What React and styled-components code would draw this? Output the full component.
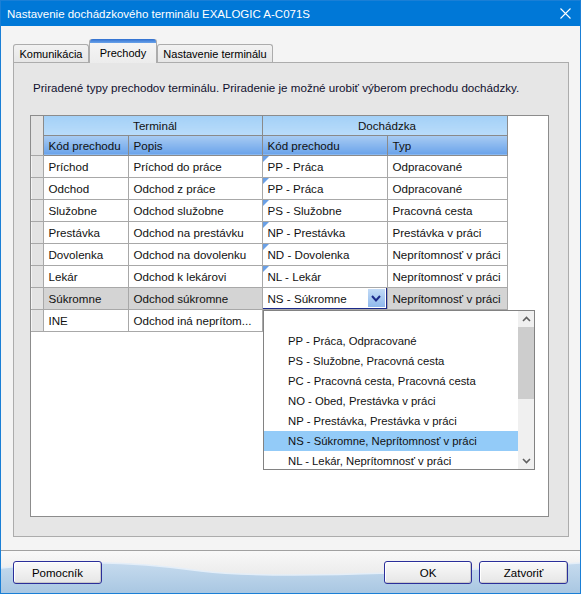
import React from "react";
import styled, { createGlobalStyle } from "styled-components";

const Global = createGlobalStyle`
  html, body { margin: 0; padding: 0; background: #f4f4f4; }
  * { box-sizing: border-box; }
  body { font-family: "Liberation Sans", Arial, sans-serif; }
`;

const Window = styled.div`
  width: 581px;
  height: 594px;
  border: 1px solid #1a7fd6;
  display: flex;
  flex-direction: column;
  background: #f4f4f4;
  overflow: hidden;
`;

const TitleBar = styled.div`
  height: 25px;
  flex: none;
  background: #0078d7;
  color: #fff;
  font-size: 11.5px;
  display: flex;
  align-items: center;
  justify-content: space-between;
  padding: 0 9px 0 6px;
`;

const Body = styled.div`
  flex: 1;
  padding: 13px 11px 13px 12px;
  display: flex;
  flex-direction: column;
`;

const TabStrip = styled.div`
  height: 23px;
  display: flex;
  align-items: flex-end;
  font-size: 11px;
`;

const Tab = styled.div`
  position: relative;
  height: ${(p) => (p.$active ? "24px" : "18px")};
  margin-bottom: ${(p) => (p.$active ? "-1px" : "0")};
  width: ${(p) => p.$w}px;
  border: 1px solid #acacac;
  border-bottom: none;
  border-radius: 3px 3px 0 0;
  background: ${(p) =>
    p.$active ? "linear-gradient(#f6f6f6, #ececec)" : "linear-gradient(#f2f2f2, #e6e6e6)"};
  color: #000;
  display: flex;
  align-items: center;
  justify-content: center;
  padding-top: ${(p) => (p.$active ? "2px" : "0")};
  z-index: ${(p) => (p.$active ? 2 : 1)};
  ${(p) =>
    p.$active &&
    `&::before{content:"";position:absolute;left:0;right:0;top:-1px;height:4px;border-radius:3px 3px 0 0;background:linear-gradient(#2f6fcf,#6aa3ea);}`}
`;

const Panel = styled.div`
  height: 475px;
  border: 1px solid #acacac;
  background: #e6e6e6;
  padding: 18px 19px 19px 16px;
  display: flex;
  flex-direction: column;
`;

const Intro = styled.div`
  font-size: 11.6px;
  line-height: 14px;
  color: #10102e;
  margin: 0 0 20px 3px;
`;

const GridBox = styled.div`
  position: relative;
  flex: 1;
  background: #fff;
  border: 1px solid #8c8c8c;
`;

const Table = styled.table`
  width: 476px;
  border-collapse: collapse;
  table-layout: fixed;
  font-size: 11.6px;
  color: #111;
`;

const Th = styled.th`
  height: ${(p) => (p.$group ? "19px" : "20px")};
  padding: 0 0 0 5px;
  font-weight: normal;
  text-align: ${(p) => (p.$center ? "center" : "left")};
  border: 1px solid #8a8a8a;
  border-top: ${(p) => (p.$top ? "none" : "1px solid #8a8a8a")};
  background: ${(p) =>
    p.$group
      ? "linear-gradient(#a3d0f7, #b9dcfa)"
      : "linear-gradient(#a9ccf3, #6aa3ea)"};
  white-space: nowrap;
  overflow: hidden;
`;

const Corner = styled.th`
  background: #e3e3e3;
  border-right: 1px solid #8a8a8a;
  border-bottom: 1px solid #a8a8a8;
`;

const RowHead = styled.td`
  background: #e3e3e3;
  border: 1px solid #a8a8a8;
  border-left: none;
  box-shadow: inset 1px 0 0 #f4f4f4;
`;

const Td = styled.td`
  position: relative;
  height: 22px;
  padding: 0 3px 0 5px;
  border: 1px solid #a8a8a8;
  background: ${(p) => (p.$sel ? "#d4d4d4" : "#fff")};
  white-space: nowrap;
  overflow: hidden;
  ${(p) =>
    p.$mark &&
    `&::before{content:"";position:absolute;left:0;top:0;border-top:6px solid #6aa0e6;border-right:6px solid transparent;}`}
`;

const ComboCell = styled.td`
  height: 22px;
  padding: 0;
  border: 1px solid #a8a8a8;
  background: #fff;
`;

const Combo = styled.div`
  height: 22px;
  margin: -1px 0 -1px -1px;
  border: 1px solid #1c2a8a;
  display: flex;
  align-items: center;
  padding-left: 5px;
  background: #fff;
`;

const ComboText = styled.span`
  flex: 1;
`;

const ComboBtn = styled.span`
  width: 17px;
  height: 18px;
  margin-right: 1px;
  background: linear-gradient(#c3dbf6, #8fb9ec);
  display: flex;
  align-items: center;
  justify-content: center;
`;

const DropList = styled.div`
  position: absolute;
  left: 232px;
  top: 194px;
  width: 272px;
  height: 160px;
  border: 1px solid #828282;
  background: #fff;
  display: flex;
  font-size: 11.3px;
  color: #111;
`;

const Items = styled.div`
  flex: 1;
  overflow: hidden;
`;

const Item = styled.div`
  height: 20px;
  line-height: 20px;
  padding-left: 24px;
  background: ${(p) => (p.$hl ? "#93cbf8" : "transparent")};
  white-space: nowrap;
`;

const Scroll = styled.div`
  width: 16px;
  background: #f0f0f0;
  display: flex;
  flex-direction: column;
`;

const ScrollArrow = styled.div`
  height: 16px;
  display: flex;
  align-items: center;
  justify-content: center;
`;

const Thumb = styled.div`
  height: 72px;
  background: #cdcdcd;
`;

const Spacer = styled.div`
  flex: 1;
`;

const Footer = styled.div`
  position: relative;
  height: 43px;
  flex: none;
  border-top: 1px solid #a0a0a0;
  background: linear-gradient(#f8f8f8, #e2e2e2);
  display: flex;
  align-items: flex-start;
  padding: 10px 12px 0 12px;
  gap: 7px;
`;

const Wave = styled.svg`
  position: absolute;
  left: 0;
  bottom: 0;
  z-index: 0;
`;

const Btn = styled.button`
  position: relative;
  z-index: 1;
  width: ${(p) => p.$w}px;
  height: 23px;
  border: 1px solid #2b2f9a;
  border-radius: 3px;
  background: linear-gradient(#fafafa, #e6e6e6);
  box-shadow: inset -1px -1px 0 #c8c8c8, inset 1px 1px 0 #fff;
  font-family: "Liberation Sans", Arial, sans-serif;
  font-size: 11.5px;
  color: #000;
  padding: 0;
  ${(p) => p.$push && "margin-left: auto;"}
`;

const rows = [
  ["Príchod", "Príchod do práce", "PP - Práca", "Odpracované"],
  ["Odchod", "Odchod z práce", "PP - Práca", "Odpracované"],
  ["Služobne", "Odchod služobne", "PS - Služobne", "Pracovná cesta"],
  ["Prestávka", "Odchod na prestávku", "NP - Prestávka", "Prestávka v práci"],
  ["Dovolenka", "Odchod na dovolenku", "ND - Dovolenka", "Neprítomnosť v práci"],
  ["Lekár", "Odchod k lekárovi", "NL - Lekár", "Neprítomnosť v práci"],
];

const items = [
  "",
  "PP - Práca, Odpracované",
  "PS - Služobne, Pracovná cesta",
  "PC - Pracovná cesta, Pracovná cesta",
  "NO - Obed, Prestávka v práci",
  "NP - Prestávka, Prestávka v práci",
  "NS - Súkromne, Neprítomnosť v práci",
  "NL - Lekár, Neprítomnosť v práci",
];

export default function App() {
  return (
    <>
      <Global />
      <Window>
        <TitleBar>
          <span>Nastavenie dochádzkového terminálu EXALOGIC A-C071S</span>
          <svg width="11" height="11" viewBox="0 0 11 11">
            <path d="M0.5 0.5 L10.5 10.5 M10.5 0.5 L0.5 10.5" stroke="#fff" strokeWidth="1.1" />
          </svg>
        </TitleBar>
        <Body>
          <TabStrip>
            <Tab $w={76}>Komunikácia</Tab>
            <Tab $w={68} $active>Prechody</Tab>
            <Tab $w={116}>Nastavenie terminálu</Tab>
          </TabStrip>
          <Panel>
            <Intro>
              Priradené typy prechodov terminálu. Priradenie je možné urobiť výberom prechodu dochádzky.
            </Intro>
            <GridBox>
              <Table>
                <colgroup>
                  <col style={{ width: 12 }} />
                  <col style={{ width: 85 }} />
                  <col style={{ width: 134 }} />
                  <col style={{ width: 125 }} />
                  <col style={{ width: 120 }} />
                </colgroup>
                <thead>
                  <tr>
                    <Corner rowSpan={2} />
                    <Th $group $center $top colSpan={2}>Terminál</Th>
                    <Th $group $center $top colSpan={2}>Dochádzka</Th>
                  </tr>
                  <tr>
                    <Th>Kód prechodu</Th>
                    <Th>Popis</Th>
                    <Th>Kód prechodu</Th>
                    <Th>Typ</Th>
                  </tr>
                </thead>
                <tbody>
                  {rows.map((r) => (
                    <tr key={r[0]}>
                      <RowHead />
                      <Td>{r[0]}</Td>
                      <Td>{r[1]}</Td>
                      <Td $mark>{r[2]}</Td>
                      <Td>{r[3]}</Td>
                    </tr>
                  ))}
                  <tr>
                    <RowHead />
                    <Td $sel>Súkromne</Td>
                    <Td $sel>Odchod súkromne</Td>
                    <ComboCell>
                      <Combo>
                        <ComboText>NS - Súkromne</ComboText>
                        <ComboBtn>
                          <svg width="10" height="7" viewBox="0 0 10 7">
                            <path d="M1 1 L5 5.5 L9 1" fill="none" stroke="#1c2a8a" strokeWidth="2" />
                          </svg>
                        </ComboBtn>
                      </Combo>
                    </ComboCell>
                    <Td $sel>Neprítomnosť v práci</Td>
                  </tr>
                  <tr>
                    <RowHead />
                    <Td>INE</Td>
                    <Td>Odchod iná neprítom...</Td>
                    <Td />
                    <Td />
                  </tr>
                </tbody>
              </Table>
              <DropList>
                <Items>
                  {items.map((t, i) => (
                    <Item key={i} $hl={i === 6}>{t}</Item>
                  ))}
                </Items>
                <Scroll>
                  <ScrollArrow>
                    <svg width="9" height="6" viewBox="0 0 9 6">
                      <path d="M1 5 L4.5 1.5 L8 5" fill="none" stroke="#606060" strokeWidth="1.6" />
                    </svg>
                  </ScrollArrow>
                  <Thumb />
                  <Spacer />
                  <ScrollArrow>
                    <svg width="9" height="6" viewBox="0 0 9 6">
                      <path d="M1 1 L4.5 4.5 L8 1" fill="none" stroke="#606060" strokeWidth="1.6" />
                    </svg>
                  </ScrollArrow>
                </Scroll>
              </DropList>
            </GridBox>
          </Panel>
        </Body>
        <Footer>
          <Wave width="579" height="42" viewBox="0 0 579 42" preserveAspectRatio="none">
            <defs>
              <linearGradient id="wv" x1="0" y1="0" x2="0" y2="1">
                <stop offset="0" stopColor="#c6dbee" />
                <stop offset="1" stopColor="#a9c7e2" />
              </linearGradient>
            </defs>
            <path d="M0 17 C 70 10, 120 9, 200 20 C 260 27, 380 25, 579 12 L579 42 L0 42 Z" fill="url(#wv)" />
            <path d="M0 17 C 70 10, 120 9, 200 20 C 260 27, 380 25, 579 12" fill="none" stroke="#e4eef8" strokeWidth="1.5" />
          </Wave>
          <Btn $w={89}>Pomocník</Btn>
          <Btn $w={88} $push>OK</Btn>
          <Btn $w={89}>Zatvoriť</Btn>
        </Footer>
      </Window>
    </>
  );
}
